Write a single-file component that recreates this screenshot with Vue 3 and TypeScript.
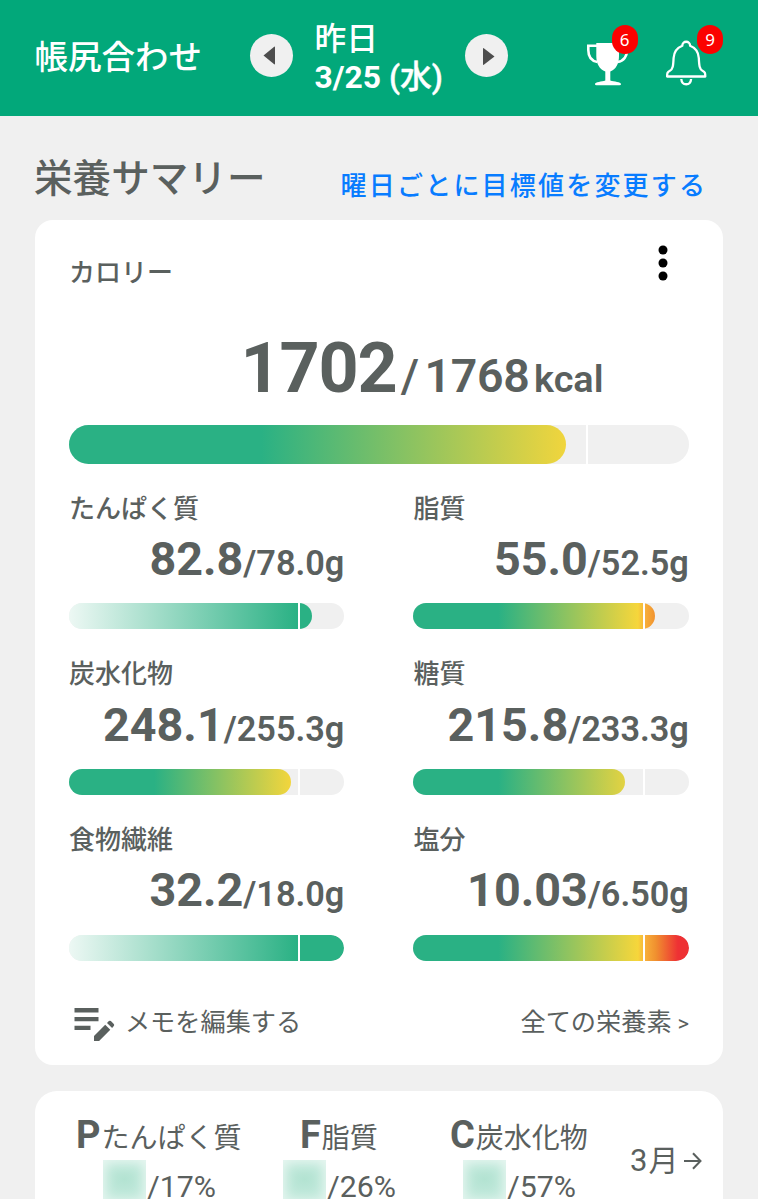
<script setup lang="ts">
interface Nutrient {
  name: string
  value: string
  goal: string
  fill: number
  kind: 'limit' | 'reach'
}

interface Ratio {
  letter: string
  name: string
  percent: string
}

const nutrients: Nutrient[] = [
  { name: 'たんぱく質', value: '82.8', goal: '78.0', fill: 88.3, kind: 'reach' },
  { name: '脂質', value: '55.0', goal: '52.5', fill: 87.7, kind: 'limit' },
  { name: '炭水化物', value: '248.1', goal: '255.3', fill: 80.7, kind: 'limit' },
  { name: '糖質', value: '215.8', goal: '233.3', fill: 76.7, kind: 'limit' },
  { name: '食物繊維', value: '32.2', goal: '18.0', fill: 100, kind: 'reach' },
  { name: '塩分', value: '10.03', goal: '6.50', fill: 100, kind: 'limit' },
]

const ratios: Ratio[] = [
  { letter: 'P', name: 'たんぱく質', percent: '/17%' },
  { letter: 'F', name: '脂質', percent: '/26%' },
  { letter: 'C', name: '炭水化物', percent: '/57%' },
]

// The gradient always spans the whole track, whatever the fill's width.
const fillStyle = (fill: number) => ({
  width: `${fill}%`,
  backgroundSize: `${10000 / fill}% 100%`,
})
</script>

<template>
  <div class="screen">
    <header class="topbar">
      <h1 class="app-title">帳尻合わせ</h1>
      <button class="round prev" aria-label="前の日">
        <svg width="43" height="43" viewBox="0 0 43 43"><path d="M13.500 21.500 24.200 12.700Q25 12.300 25 13.300V29.700Q25 30.700 24.200 30.300Z" fill="#4d4d4d" /></svg>
      </button>
      <div class="date">
        <span class="day">昨日</span>
        <span class="md">3/25 <span class="wd">(水)</span></span>
      </div>
      <button class="round next" aria-label="次の日">
        <svg width="43" height="43" viewBox="0 0 43 43"><path d="M29.500 22.500 18.800 14.200Q18 13.800 18 14.800V30.200Q18 31.200 18.800 30.800Z" fill="#4d4d4d" /></svg>
      </button>
      <div class="icon trophy">
        <svg width="44" height="46" viewBox="0 0 44 46" fill="none" stroke="#fff">
          <path d="M11 4.700H2.300V9C2.300 15 5 20 11.500 21M32 4.700H41V9C41 15 38 20 31.500 21" stroke-width="2.600" />
          <path d="M10.300 2H33V15C33 22.500 30 28.500 24.300 30.500V39.500C28 41 35 40.500 35 43.200Q35 44.300 33.500 44.300H10.500Q9 44.300 9 43.200C9 40.500 16 41 19.300 39.500V30.500C13.500 28.500 10.300 22.500 10.300 15Z" fill="#fff" stroke="none" />
        </svg>
        <span class="badge">6</span>
      </div>
      <div class="icon bell">
        <svg width="44" height="48" viewBox="0 0 44 48" fill="none" stroke="#fff" stroke-width="2.300" stroke-linejoin="round">
          <path d="M18.300 6.800C18.200 1.400 26.200 1.400 26.100 6.800C33 9.500 34.500 14.500 34.800 19C35.200 27 35.500 30.300 38.500 31.800C41 33 41.300 34 41.300 37.500H3.100C3.100 34 3.400 33 5.900 31.800C8.900 30.300 9.200 27 9.600 19C9.900 14.500 11.400 9.500 18.300 6.800Z" />
          <path d="M17.300 40C17.800 47 26.600 47 27.100 40" />
        </svg>
        <span class="badge">9</span>
      </div>
    </header>

    <div class="heading">
      <h2>栄養サマリー</h2>
      <a class="link">曜日ごとに目標値を変更する</a>
    </div>

    <section class="card summary">
      <div class="card-head">
        <span class="label">カロリー</span>
        <svg class="dots" width="10" height="36" viewBox="0 0 10 36"><circle cx="5" cy="5" r="4.500" /><circle cx="5" cy="18" r="4.500" /><circle cx="5" cy="31" r="4.500" /></svg>
      </div>
      <div class="calories">
        <span class="cal-now">1702</span><span class="cal-slash">/</span><span class="cal-goal">1768</span><span class="cal-unit">kcal</span>
      </div>
      <div class="track large">
        <div class="fill limit" :style="fillStyle(80.1)"></div>
        <i class="mark"></i>
      </div>

      <div class="grid">
        <div v-for="n in nutrients" :key="n.name" class="nutrient">
          <div class="label">{{ n.name }}</div>
          <div class="amount"><span class="now">{{ n.value }}</span><span class="goal">/{{ n.goal }}g</span></div>
          <div class="track">
            <div class="fill" :class="n.kind" :style="fillStyle(n.fill)"></div>
            <i class="mark"></i>
          </div>
        </div>
      </div>

      <div class="card-foot">
        <svg width="42" height="36" viewBox="0 0 42 36" fill="#5a605e">
          <path d="M0.500 2H24.500V6.500H0.500ZM0.500 10.900H24.500V15.300H0.500ZM0.500 19.700H16.500V24.100H0.500Z" />
          <path d="M20 29.900 31.200 18.700 36.300 23.800 25.100 35H20ZM33 16.900 34.900 15.100Q35.900 14.300 36.900 15.100L39.800 18Q40.700 19 39.800 20L38.100 22Z" />
        </svg>
        <span class="memo">メモを編集する</span>
        <span class="all">全ての栄養素<span class="gt">&gt;</span></span>
      </div>
    </section>

    <section class="card pfc">
      <div v-for="r in ratios" :key="r.letter" class="ratio">
        <div class="ratio-name"><b>{{ r.letter }}</b><span>{{ r.name }}</span></div>
        <div class="ratio-value"><i class="masked"></i><span>{{ r.percent }}</span></div>
      </div>
      <div class="month">
        <span class="num">3</span><span class="tsuki">月</span>
        <svg width="18" height="18" viewBox="0 0 18 18" fill="none" stroke="#5a605e" stroke-width="2"><path d="M0 9H16.500M9 1.200 16.500 9 9 16.800" /></svg>
      </div>
    </section>
  </div>
</template>

<style>
body {
  margin: 0;
  background: #f0f0f0;
}
</style>

<style scoped>
.screen {
  box-sizing: border-box;
  width: 758px;
  height: 1199px;
  overflow: hidden;
  background: #f0f0f0;
  color: #5a605e;
  font-family: Roboto, "Noto Sans CJK JP", sans-serif;
}
.topbar {
  box-sizing: border-box;
  height: 115.500px;
  background: #02a87a;
  color: #fff;
  display: flex;
  align-items: flex-start;
  padding-left: 34.500px;
}
.app-title {
  margin: 37.500px 0 0;
  width: 215px;
  font-size: 33.500px;
  line-height: 40px;
  font-weight: 500;
  white-space: nowrap;
}
.round {
  width: 43px;
  height: 43px;
  margin-top: 34px;
  padding: 0;
  border: 0;
  border-radius: 50%;
  background: #f0f0f0;
}
.round svg {
  display: block;
}
.date {
  width: 151px;
  margin: 19.500px 0 0 22px;
  display: flex;
  flex-direction: column;
  font-size: 31.800px;
  line-height: 38px;
  white-space: nowrap;
}
.day {
  font-weight: 500;
}
.md {
  font-weight: 700;
  height: 38px;
}
.wd {
  font-weight: 500;
  -webkit-text-stroke: 0.400px #fff;
}
.next {
  margin-left: -0.500px;
}
.icon {
  position: relative;
  height: 48px;
}
.icon svg {
  display: block;
}
.trophy {
  margin: 41px 0 0 78px;
}
.bell {
  margin: 39px 0 0 33.500px;
}
.badge {
  position: absolute;
  left: 25.500px;
  top: -16px;
  width: 26px;
  height: 29px;
  border-radius: 13px;
  background: #fb0200;
  font: 17px/29px "Noto Sans", sans-serif;
  text-align: center;
}
.bell .badge {
  left: 33.500px;
  top: -14px;
}
.heading {
  height: 104.500px;
  padding: 0 53px 0 34px;
  display: flex;
  justify-content: space-between;
}
h2 {
  margin: 37.500px 0 0;
  font-size: 38.600px;
  line-height: 52px;
  font-weight: 500;
}
.link {
  margin-top: 51px;
  font-size: 26px;
  line-height: 38px;
  letter-spacing: 2.200px;
  margin-right: -2.200px;
  font-weight: 500;
  color: #087cff;
}
.card {
  box-sizing: border-box;
  width: 688.800px;
  margin-left: 34.600px;
  border-radius: 18px;
  background: #fff;
}
.summary {
  height: 845px;
  padding: 25px 34.300px 0;
}
.card-head {
  height: 87.500px;
  display: flex;
  justify-content: space-between;
}
.card-head .label {
  margin-top: 11px;
}
.dots {
  margin-right: 21px;
}
.label {
  font-size: 26px;
  line-height: 34px;
  height: 34px;
  font-weight: 500;
}
.calories {
  display: flex;
  align-items: baseline;
  height: 70px;
  padding-left: 171.500px;
  margin-bottom: 22.800px;
  line-height: 1;
  white-space: nowrap;
}
.calories span {
  line-height: 1;
}
.cal-now {
  font-size: 70px;
  font-weight: 700;
  letter-spacing: -1.100px;
}
.cal-slash {
  font-size: 47px;
  font-weight: 500;
  margin: 0 5.500px 0 4px;
}
.cal-goal {
  font-size: 46.500px;
  font-weight: 600;
  letter-spacing: -0.300px;
}
.cal-unit {
  font-size: 37.800px;
  font-weight: 600;
  margin-left: 4.500px;
}
.track {
  position: relative;
  height: 26px;
  border-radius: 20px;
  background: #f0f0f0;
  overflow: hidden;
}
.track.large {
  height: 38.500px;
}
.fill {
  height: 100%;
  border-radius: 0 20px 20px 0;
  background-repeat: no-repeat;
}
.limit {
  background-image: linear-gradient(90deg, #2ab184 31%, #f6d63b 81.500%, #f8b03a 84%, #f0902f 88%, #ee3134 96%);
}
.reach {
  background-image: linear-gradient(90deg, #edf8f4, #2ab184 83.300%);
}
.mark {
  position: absolute;
  left: 83.300%;
  top: 0;
  width: 2px;
  height: 100%;
  background: #fff;
}
.grid {
  display: grid;
  grid-template-columns: 275.500px 275.500px;
  column-gap: 69px;
  row-gap: 27.700px;
  margin-top: 28px;
}
.nutrient {
  height: 138px;
}
.amount {
  display: flex;
  justify-content: flex-end;
  align-items: baseline;
  height: 46px;
  margin: 10.300px 0 21.200px;
  line-height: 1;
}
.amount span {
  line-height: 1;
}
.now {
  font-size: 46.700px;
  font-weight: 700;
}
.goal {
  font-size: 34.300px;
  font-weight: 600;
}
.card-foot {
  display: flex;
  margin-top: 45px;
  padding-left: 5.500px;
  font-size: 25.200px;
  line-height: 33px;
}
.memo {
  margin-left: 8.500px;
}
.all {
  margin-left: auto;
}
.gt {
  margin-left: 6px;
  font-size: 22px;
}
.pfc {
  height: 240px;
  margin-top: 26px;
  padding-left: 35px;
  border-radius: 22px;
  display: flex;
}
.ratio {
  width: 180px;
  padding-top: 21.500px;
  white-space: nowrap;
}
.ratio-name {
  height: 47.500px;
  line-height: 44px;
  display: flex;
  justify-content: center;
  align-items: baseline;
  font-size: 28px;
}
.ratio-name b {
  margin-left: -1.500px;
  font-size: 38px;
  letter-spacing: 1px;
}
.ratio-value {
  display: flex;
  justify-content: center;
  font-size: 30.300px;
}
.ratio-value span {
  height: 24px;
  margin-top: 14.500px;
  line-height: 24px;
}
.masked {
  width: 43px;
  height: 43px;
  margin-right: 1px;
  background: radial-gradient(ellipse 28px 20px at 50% 45%, #b3e3d2, #c4eadd);
  box-shadow: inset 0 0 12px 2px #eaf7f2;
}
.month {
  display: flex;
  align-items: center;
  height: 40px;
  margin: 50px 0 0 20.500px;
  font-size: 31px;
  line-height: 40px;
}
.tsuki {
  margin: 0 5px 0 1px;
  font-size: 30px;
}
</style>
